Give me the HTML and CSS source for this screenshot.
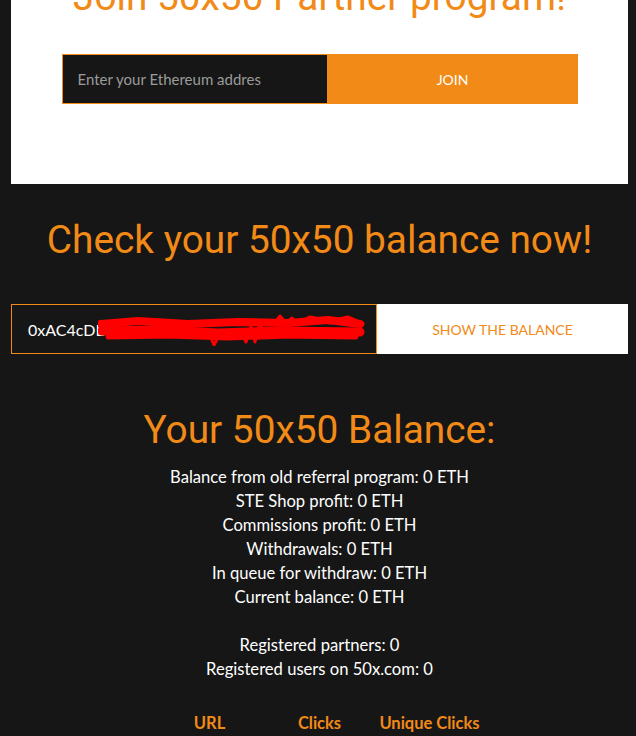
FILE: index.html
```html
<!DOCTYPE html>
<html>
<head>
<meta charset="utf-8">
<link rel="stylesheet" href="styles.css">
</head>
<body>
<div class="page">
  <section class="card">
    <h1 class="card-title">Join 50x50 Partner program!</h1>
    <form class="join-row">
      <div class="join-input">Enter your Ethereum addres</div>
      <div class="join-btn">JOIN</div>
    </form>
  </section>

  <h2 class="big-title check-title">Check your 50x50 balance now!</h2>

  <div class="balance-row">
    <div class="balance-input">
      <span class="addr">0xAC4cDD</span>
      <svg class="scribble" width="268" height="34" viewBox="0 0 268 34">
        <g fill="none" stroke="#ff0000" stroke-linecap="round" stroke-linejoin="round">
          <path d="M3 12 L40 9 L90 12 L140 10 L190 11 L230 8 L262 12" stroke-width="8"/>
          <path d="M4 19 L60 18 L120 21 L180 19 L262 20" stroke-width="9"/>
          <path d="M10 25 L70 24 L130 26 L190 24 L258 25" stroke-width="5"/>
          <path d="M112 24 L116 33 L122 22 M145 24 L148 30 L153 14 L157 30 L162 10 L166 26 M176 12 L182 4 L188 11 L194 6 L200 12" stroke-width="3"/>
          <path d="M200 12 L212 6 L232 10 L250 6 L264 12" stroke-width="5"/>
        </g>
      </svg>
    </div>
    <div class="balance-btn">SHOW THE BALANCE</div>
  </div>

  <h2 class="big-title your-title">Your 50x50 Balance:</h2>

  <div class="stats">
    <p>Balance from old referral program: 0 ETH</p>
    <p>STE Shop profit: 0 ETH</p>
    <p>Commissions profit: 0 ETH</p>
    <p>Withdrawals: 0 ETH</p>
    <p>In queue for withdraw: 0 ETH</p>
    <p>Current balance: 0 ETH</p>
    <p class="gap">Registered partners: 0</p>
    <p>Registered users on 50x.com: 0</p>
  </div>

  <div class="table-head">
    <div>URL</div>
    <div>Clicks</div>
    <div>Unique Clicks</div>
  </div>
</div>
</body>
</html>
```

FILE: styles.css
```css
html, body {
  margin: 0;
  padding: 0;
  background: #161616;
  font-family: "Lato", "Open Sans", sans-serif;
  color: #ffffff;
  overflow: hidden;
}

.page {
  padding: 0 8px 0 11px;
}

.card {
  background: #ffffff;
  height: 184px;
  display: flex;
  flex-direction: column;
  align-items: center;
}

.card-title {
  margin: -28px 0 0;
  font-family: "Roboto", "Lato", sans-serif;
  font-size: 38.8px;
  line-height: 50px;
  font-weight: 400;
  color: #f28a17;
  white-space: nowrap;
}

.join-row {
  margin: 32px 0 0;
  display: flex;
  width: 516px;
  height: 50px;
}

.join-input {
  width: 266px;
  box-sizing: border-box;
  background: #161616;
  border: 1px solid #f28a17;
  padding-left: 15px;
  display: flex;
  align-items: center;
  font-size: 15px;
  color: #9b9b9b;
}

.join-btn {
  flex: 1;
  background: #f28a17;
  display: flex;
  align-items: center;
  justify-content: center;
  font-size: 14px;
  color: #ffffff;
}

.big-title {
  margin: 0;
  text-align: center;
  font-family: "Roboto", "Lato", sans-serif;
  font-size: 38.8px;
  font-weight: 400;
  color: #f28a17;
  line-height: 50px;
}

.check-title {
  margin-top: 31px;
}

.balance-row {
  margin-top: 39px;
  display: flex;
  height: 50px;
}

.balance-input {
  width: 366px;
  box-sizing: border-box;
  border: 1px solid #f28a17;
  background: #161616;
  padding-left: 16px;
  display: flex;
  align-items: center;
  font-size: 16px;
  color: #ffffff;
}

.scribble {
  display: block;
  margin-left: -10px;
}

.balance-btn {
  flex: 1;
  background: #ffffff;
  color: #f28a17;
  font-size: 14px;
  display: flex;
  align-items: center;
  justify-content: center;
}

.your-title {
  margin-top: 51px;
}

.stats {
  margin-top: 10px;
  text-align: center;
  font-size: 16.6px;
  line-height: 24px;
}

.stats p {
  margin: 0;
}

.stats .gap {
  margin-top: 24px;
}

.table-head {
  margin-top: 32px;
  display: grid;
  grid-template-columns: 110px 110px 110px;
  justify-content: center;
  text-align: center;
  font-size: 16.5px;
  font-weight: 700;
  color: #f28a17;
}
```
